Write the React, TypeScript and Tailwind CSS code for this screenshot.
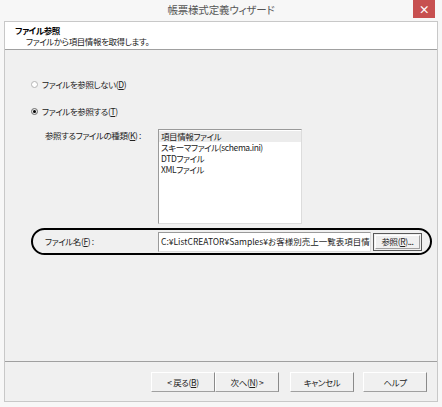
import { ReactNode } from 'react';

function Ul({ children }: { children: ReactNode }) {
  return <span className="underline underline-offset-1">{children}</span>;
}

function Radio({ checked, children }: { checked?: boolean; children: ReactNode }) {
  return (
    <div className="flex items-center h-[12px]">
      <span
        className={`w-[7px] h-[7px] rounded-full border flex items-center justify-center ${
          checked ? 'border-[#6b6b6b] bg-[#e8e8e8]' : 'border-[#b5b5b5] bg-white'
        }`}
      >
        {checked && <span className="w-[3px] h-[3px] rounded-full bg-black" />}
      </span>
      <span className="ml-[4px]">{children}</span>
    </div>
  );
}

function WizButton({ children }: { children: ReactNode }) {
  return (
    <button className="w-[64px] h-[20px] bg-[#f0f0f0] border-t border-l border-t-white border-l-white border-b border-r border-b-[#a0a0a0] border-r-[#8a8a8a] flex items-center justify-center">
      {children}
    </button>
  );
}

export default function App() {
  const fileTypes = ['項目情報ファイル', 'スキーマファイル(schema.ini)', 'DTDファイル', 'XMLファイル'];

  return (
    <div className="w-[442px] h-[407px] bg-[#f7f7f7] flex flex-col px-[4px] pb-[5px] relative text-[#222] text-[8.5px] tracking-[-0.4px] font-['Noto_Sans_CJK_JP','Liberation_Sans',sans-serif] [font-feature-settings:'palt'] leading-none">
      {/* title bar */}
      <div className="h-[21px] flex items-center justify-center text-[10.5px] tracking-[-0.2px] text-[#555]">
        帳票様式定義ウィザード
      </div>
      <div className="absolute top-0 right-[7px] w-[22px] h-[18px] bg-[#c75050] flex items-center justify-center text-white text-[11px] font-bold">
        ×
      </div>

      {/* client */}
      <div className="flex-1 border border-[#c8c8c8] bg-[#f0f0f0] flex flex-col">
        {/* header */}
        <div className="h-[28px] bg-white border-b border-[#a0a0a0] flex flex-col justify-center pl-[10px] gap-[3px]">
          <div className="font-bold text-black">ファイル参照</div>
          <div className="pl-[11px]">ファイルから項目情報を取得します。</div>
        </div>

        {/* body */}
        <div className="flex-1 flex flex-col pt-[28px]">
          <div className="pl-[26px] flex flex-col gap-[15px]">
            <Radio>
              ファイルを参照しない(<Ul>D</Ul>)
            </Radio>
            <Radio checked>
              ファイルを参照する(<Ul>T</Ul>)
            </Radio>
          </div>

          <div className="flex mt-[12px] pl-[40px]">
            <div className="w-[113px] pt-[2px]">
              参照するファイルの種類(<Ul>K</Ul>) :
            </div>
            <div className="w-[144px] h-[95px] bg-white border border-[#9a9a9a] border-b-[#dcdcdc] border-r-[#dcdcdc] pt-[1px]">
              {fileTypes.map((t, i) => (
                <div
                  key={t}
                  className={`h-[11px] flex items-center pl-[2px] ${i === 0 ? 'bg-[#ececec]' : ''}`}
                >
                  {t}
                </div>
              ))}
            </div>
          </div>

          <div className="mt-[4px] ml-[26px] mr-[5px] h-[27px] border-2 border-black rounded-full flex items-center pl-[12px]">
            <div className="w-[113px]">
              ファイル名(<Ul>F</Ul>) :
            </div>
            <div className="w-[213px] h-[20px] bg-white border border-[#9a9a9a] border-b-[#dcdcdc] border-r-[#dcdcdc] flex items-center pl-[2px] overflow-hidden whitespace-nowrap tracking-normal">
              C:¥ListCREATOR¥Samples¥お客様別売上一覧表項目情報.csv
            </div>
            <div className="ml-[2px] w-[49px] h-[18px] border border-[#5a5a5a] p-[1px]">
              <div className="w-full h-full bg-[#f0f0f0] border-t border-l border-t-white border-l-white border-b border-r border-b-[#a0a0a0] border-r-[#a0a0a0] flex items-center justify-center">
                参照(<Ul>R</Ul>)...
              </div>
            </div>
          </div>
        </div>

        {/* footer */}
        <div className="h-[40px] border-t border-[#a0a0a0] flex items-start justify-end pt-[10px] pr-[10px]">
          <WizButton>
            &lt; 戻る(<Ul>B</Ul>)
          </WizButton>
          <WizButton>
            次へ(<Ul>N</Ul>) &gt;
          </WizButton>
          <div className="w-[11px]" />
          <WizButton>キャンセル</WizButton>
          <div className="w-[9px]" />
          <WizButton>ヘルプ</WizButton>
        </div>
      </div>
    </div>
  );
}
